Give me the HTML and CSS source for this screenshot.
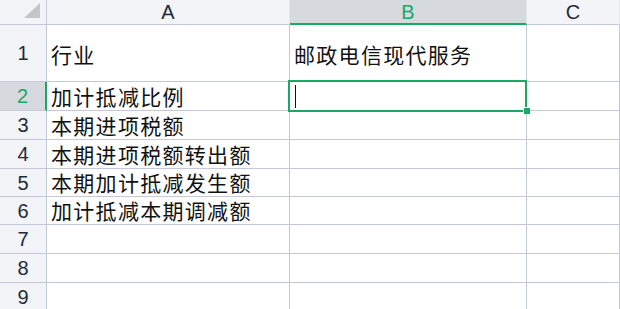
FILE: index.html
```html
<!DOCTYPE html>
<html lang="zh-CN">
<head>
  <meta charset="UTF-8">
  <title>Sheet1</title>
  <link rel="stylesheet" href="styles.css">
</head>
<body>
  <div class="sheet">
    <!-- header row -->
    <div class="corner"><span class="corner-tri"></span></div>
    <div class="col-head">A</div>
    <div class="col-head active">B</div>
    <div class="col-head">C</div>

    <div class="row-head r1">1</div>
    <div class="cell r1">行业</div>
    <div class="cell r1">邮政电信现代服务</div>
    <div class="cell r1"></div>

    <div class="row-head active r2">2</div>
    <div class="cell r2">加计抵减比例</div>
    <div class="cell r2 selected"><span class="caret"></span><span class="handle"></span></div>
    <div class="cell r2"></div>

    <div class="row-head r3">3</div>
    <div class="cell r3">本期进项税额</div>
    <div class="cell r3"></div>
    <div class="cell r3"></div>

    <div class="row-head r4">4</div>
    <div class="cell r4">本期进项税额转出额</div>
    <div class="cell r4"></div>
    <div class="cell r4"></div>

    <div class="row-head r5">5</div>
    <div class="cell r5">本期加计抵减发生额</div>
    <div class="cell r5"></div>
    <div class="cell r5"></div>

    <div class="row-head r6">6</div>
    <div class="cell r6">加计抵减本期调减额</div>
    <div class="cell r6"></div>
    <div class="cell r6"></div>

    <div class="row-head">7</div>
    <div class="cell"></div>
    <div class="cell"></div>
    <div class="cell"></div>

    <div class="row-head">8</div>
    <div class="cell"></div>
    <div class="cell"></div>
    <div class="cell"></div>

    <div class="row-head">9</div>
    <div class="cell"></div>
    <div class="cell"></div>
    <div class="cell"></div>
  </div>
</body>
</html>
```

FILE: styles.css
```css
body {
  margin: 0;
  background: #ffffff;
  overflow: hidden;
  font-family: "Noto Sans CJK SC", "Noto Sans", sans-serif;
}

.sheet {
  display: grid;
  grid-template-columns: 47px 243px 237px 1fr;
  grid-template-rows: 25px 57px 29px 29px 29px 28px 28px 29px 29px 29px;
  width: 620px;
  height: 309px;
  overflow: hidden;
}

.sheet > div {
  box-sizing: border-box;
  border-right: 1px solid #c3c9d8;
  border-bottom: 1px solid #c3c9d8;
}

.corner {
  background: #f3f4f7;
  position: relative;
}

.corner-tri {
  position: absolute;
  left: 24px;
  top: 3px;
  width: 0;
  height: 0;
  border-left: 16px solid transparent;
  border-bottom: 15px solid #c3c5c9;
}

.col-head {
  background: #f3f4f7;
  border-right-color: #e3e6ec !important;
  color: #1e2a3a;
  font-family: "Liberation Sans", "DejaVu Sans", sans-serif;
  font-size: 20px;
  display: flex;
  align-items: center;
  justify-content: center;
  line-height: 1;
}

.col-head.active {
  background: #d6d9de;
  color: #1aa865;
  border-bottom: 2px solid #1aa865 !important;
}

.row-head {
  background: #f3f4f7;
  color: #1e2a3a;
  font-family: "Liberation Sans", "DejaVu Sans", sans-serif;
  font-size: 20px;
  display: flex;
  align-items: center;
  justify-content: center;
  line-height: 1;
}

.row-head.active {
  background: #d6d9de;
  color: #1aa865;
  border-right: 2px solid #1aa865 !important;
}

.cell {
  color: #111;
  font-size: 21px;
  line-height: 21px;
  display: flex;
  align-items: center;
  padding-left: 4px;
  white-space: nowrap;
  letter-spacing: 1.3px;
}

.cell.r1 {
  padding-top: 2px;
}

.selected {
  position: relative;
}

.selected::after {
  content: "";
  position: absolute;
  left: -2px;
  top: -2px;
  right: -1px;
  bottom: -2px;
  border: 2px solid #1aa865;
}

.caret {
  position: absolute;
  left: 5px;
  top: 3px;
  width: 1px;
  height: 23px;
  background: #111;
}

.handle {
  position: absolute;
  right: -4px;
  bottom: -4px;
  width: 6px;
  height: 6px;
  background: #1aa865;
  border-left: 1px solid #fff;
  border-top: 1px solid #fff;
  z-index: 2;
}
```
